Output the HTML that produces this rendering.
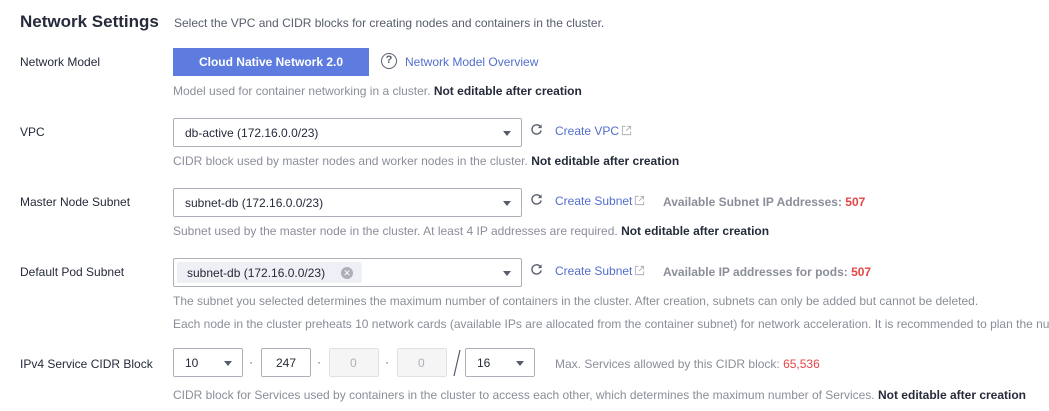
<!DOCTYPE html>
<html><head><style>
*{box-sizing:border-box;margin:0;padding:0}
body{width:1049px;height:411px;overflow:hidden;background:#fff;font-family:"Liberation Sans",Arial,sans-serif;font-size:12px;color:#252b3a;position:relative}
.a{position:absolute;white-space:nowrap}
.h{color:#8a8e99;font-size:12px}
.h b{color:#252b3a}
.lbl{left:20px;color:#252b3a}
.sel{position:absolute;border:1px solid #adb0b8;background:#fff;height:29px;border-radius:2px}
.sel span{position:absolute;left:11px;top:7px}
.arr{position:absolute;right:10px;top:12px;width:0;height:0;border-left:4px solid transparent;border-right:4px solid transparent;border-top:5px solid #575d6c}
.lnk{color:#526ecc}
.red{color:#e54545}
.dot{position:absolute;color:#575d6c}
.ext{vertical-align:-1px;margin-left:2px}
</style></head><body>
<div class="a" style="left:20px;top:12px;font-size:17px;font-weight:bold">Network Settings</div>
<div class="a h" style="left:174px;top:16px;color:#575d6c">Select the VPC and CIDR blocks for creating nodes and containers in the cluster.</div>

<div class="a lbl" style="top:55px">Network Model</div>
<div class="a" style="left:173px;top:48px;width:196px;height:28px;background:#5e7ce0;color:#fff;text-align:center;line-height:28px;font-weight:bold;font-size:12px">Cloud Native Network 2.0</div>
<div class="a" style="left:381px;top:53px;width:16px;height:16px;border:1.5px solid #575d6c;border-radius:50%;text-align:center;font-size:11px;line-height:13px;font-weight:bold;color:#575d6c">?</div>
<div class="a lnk" style="left:405px;top:55px">Network Model Overview</div>
<div class="a h" style="left:173px;top:84px">Model used for container networking in a cluster. <b>Not editable after creation</b></div>

<svg width="0" height="0" style="position:absolute"><defs>
<symbol id="rf" viewBox="0 0 14 14"><path d="M11.5 4.5A5 5 0 1 0 12 8" fill="none" stroke="#575d6c" stroke-width="1.5"/><path d="M12.5 1.5v4h-4z" fill="#575d6c"/></symbol>
<symbol id="ex" viewBox="0 0 12 12"><path d="M5 1.5H1.5v9h9V7" fill="none" stroke="#adb0b8" stroke-width="1"/><path d="M7 1.5h3.5V5M10.5 1.5L5.5 6.5" fill="none" stroke="#adb0b8" stroke-width="1"/></symbol>
</defs></svg>

<div class="a lbl" style="top:125px">VPC</div>
<div class="sel" style="left:173px;top:118px;width:349px"><span>db-active (172.16.0.0/23)</span><i class="arr"></i></div>
<svg class="a" style="left:530px;top:123px" width="13" height="13"><use href="#rf"/></svg>
<div class="a lnk" style="left:555px;top:124px">Create VPC<svg class="ext" width="11" height="11"><use href="#ex"/></svg></div>
<div class="a h" style="left:173px;top:154px">CIDR block used by master nodes and worker nodes in the cluster. <b>Not editable after creation</b></div>

<div class="a lbl" style="top:195px">Master Node Subnet</div>
<div class="sel" style="left:173px;top:188px;width:349px"><span>subnet-db (172.16.0.0/23)</span><i class="arr"></i></div>
<svg class="a" style="left:530px;top:193px" width="13" height="13"><use href="#rf"/></svg>
<div class="a lnk" style="left:555px;top:194px">Create Subnet<svg class="ext" width="11" height="11"><use href="#ex"/></svg></div>
<div class="a" style="left:663px;top:195px;color:#8a8e99;font-weight:bold">Available Subnet IP Addresses: <span class="red">507</span></div>
<div class="a h" style="left:173px;top:224px">Subnet used by the master node in the cluster. At least 4 IP addresses are required. <b>Not editable after creation</b></div>

<div class="a lbl" style="top:265px">Default Pod Subnet</div>
<div class="sel" style="left:173px;top:258px;width:349px"><div style="position:absolute;left:3px;top:3px;width:185px;height:21px;background:#eef0f5;border-radius:2px"></div><span style="left:13px">subnet-db (172.16.0.0/23)</span><div style="position:absolute;left:167px;top:8px;width:12px;height:12px;border-radius:50%;background:#adb0b8;color:#fff;font-size:9px;line-height:12px;text-align:center">✕</div><i class="arr"></i></div>
<svg class="a" style="left:530px;top:263px" width="13" height="13"><use href="#rf"/></svg>
<div class="a lnk" style="left:555px;top:264px">Create Subnet<svg class="ext" width="11" height="11"><use href="#ex"/></svg></div>
<div class="a" style="left:663px;top:265px;color:#8a8e99;font-weight:bold">Available IP addresses for pods: <span class="red">507</span></div>
<div class="a h" style="left:173px;top:294px">The subnet you selected determines the maximum number of containers in the cluster. After creation, subnets can only be added but cannot be deleted.</div>
<div class="a h" style="left:173px;top:317px">Each node in the cluster preheats 10 network cards (available IPs are allocated from the container subnet) for network acceleration. It is recommended to plan the nu</div>

<div class="a lbl" style="top:357px">IPv4 Service CIDR Block</div>
<div class="sel" style="left:173px;top:348px;width:70px"><span>10</span><i class="arr"></i></div>
<div class="dot" style="left:249px;top:355px">·</div>
<div class="sel" style="left:261px;top:348px;width:50px"><span style="left:14px">247</span></div>
<div class="dot" style="left:317px;top:355px">·</div>
<div class="sel" style="left:329px;top:348px;width:50px;background:#f5f5f6;border-color:#dfe1e6;color:#adb0b8"><span style="left:20px">0</span></div>
<div class="dot" style="left:385px;top:355px">·</div>
<div class="sel" style="left:397px;top:348px;width:50px;background:#f5f5f6;border-color:#dfe1e6;color:#adb0b8"><span style="left:20px">0</span></div>
<svg class="a" style="left:452px;top:349px" width="10" height="28"><path d="M8 1L2 27" stroke="#575d6c" stroke-width="1.2"/></svg>
<div class="sel" style="left:465px;top:348px;width:70px"><span>16</span><i class="arr"></i></div>
<div class="a h" style="left:555px;top:357px">Max. Services allowed by this CIDR block: <span class="red">65,536</span></div>
<div class="a h" style="left:173px;top:388px">CIDR block for Services used by containers in the cluster to access each other, which determines the maximum number of Services. <b>Not editable after creation</b></div>
</body></html>
